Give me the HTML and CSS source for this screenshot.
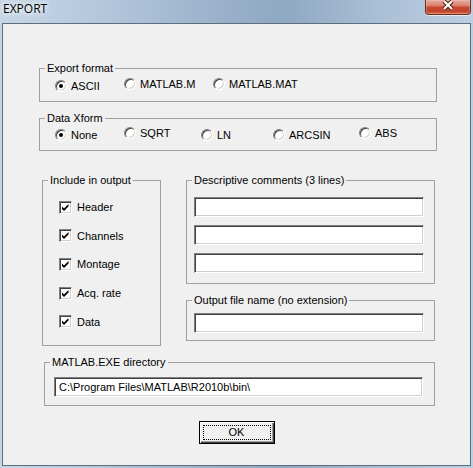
FILE: index.html
```html
<!DOCTYPE html>
<html>
<head>
<meta charset="utf-8">
<title>EXPORT</title>
<link rel="stylesheet" href="styles.css">
</head>
<body>
<div class="window">
  <div class="titlebar">
    <span class="title">EXPORT</span>
    <div class="close">
      <svg width="12" height="10" viewBox="0 0 12 10">
        <path d="M2 1 L10 9 M10 1 L2 9" stroke="#4d1b13" stroke-width="4.2" fill="none"/>
        <path d="M2 1 L10 9 M10 1 L2 9" stroke="#ffffff" stroke-width="2.2" fill="none"/>
      </svg>
    </div>
  </div>
  <div class="client">
    <fieldset class="group g-format">
      <legend>Export format</legend>
      <div class="radios r-format">
        <label class="opt low"><span class="radio on"></span>ASCII</label>
        <label class="opt"><span class="radio"></span>MATLAB.M</label>
        <label class="opt"><span class="radio"></span>MATLAB.MAT</label>
      </div>
    </fieldset>

    <fieldset class="group g-xform">
      <legend>Data Xform</legend>
      <div class="radios r-xform">
        <label class="opt low"><span class="radio on"></span>None</label>
        <label class="opt"><span class="radio"></span>SQRT</label>
        <label class="opt low"><span class="radio"></span>LN</label>
        <label class="opt low"><span class="radio"></span>ARCSIN</label>
        <label class="opt"><span class="radio"></span>ABS</label>
      </div>
    </fieldset>

    <div class="row">
      <fieldset class="group g-include">
        <legend>Include in output</legend>
        <div class="checks">
          <label class="chk"><span class="box"><svg viewBox="0 0 11 11"><polygon points="2,4.5 4,6.5 8.5,2 8.5,4.5 4,9 2,7" fill="#000"/></svg></span>Header</label>
          <label class="chk"><span class="box"><svg viewBox="0 0 11 11"><polygon points="2,4.5 4,6.5 8.5,2 8.5,4.5 4,9 2,7" fill="#000"/></svg></span>Channels</label>
          <label class="chk"><span class="box"><svg viewBox="0 0 11 11"><polygon points="2,4.5 4,6.5 8.5,2 8.5,4.5 4,9 2,7" fill="#000"/></svg></span>Montage</label>
          <label class="chk"><span class="box"><svg viewBox="0 0 11 11"><polygon points="2,4.5 4,6.5 8.5,2 8.5,4.5 4,9 2,7" fill="#000"/></svg></span>Acq. rate</label>
          <label class="chk"><span class="box"><svg viewBox="0 0 11 11"><polygon points="2,4.5 4,6.5 8.5,2 8.5,4.5 4,9 2,7" fill="#000"/></svg></span>Data</label>
        </div>
      </fieldset>

      <div class="rightcol">
        <fieldset class="group g-comments">
          <legend>Descriptive comments (3 lines)</legend>
          <div class="stack">
            <input class="field f-short" type="text" value="">
            <input class="field f-short" type="text" value="">
            <input class="field f-short" type="text" value="">
          </div>
        </fieldset>
        <fieldset class="group g-file">
          <legend>Output file name (no extension)</legend>
          <input class="field f-short" type="text" value="">
        </fieldset>
      </div>
    </div>

    <fieldset class="group g-matlab">
      <legend>MATLAB.EXE directory</legend>
      <input class="field f-long" type="text" value="C:\Program Files\MATLAB\R2010b\bin\">
    </fieldset>

    <div class="actions">
      <button class="ok" type="button"><span class="focus">OK</span></button>
    </div>
  </div>
</div>
</body>
</html>
```

FILE: styles.css
```css
* { box-sizing: border-box; }
html, body { margin: 0; padding: 0; }
body {
  width: 473px;
  height: 468px;
  overflow: hidden;
  background: #b5c9de;
}
.window {
  width: 473px;
  height: 468px;
  display: flex;
  flex-direction: column;
  padding: 0 2px 2px 2px;
  background: linear-gradient(90deg, #c6d6e7 0%, #b3c7dc 22%, #98b0c9 48%, #8fa8c3 60%, #a9bfd5 80%, #bccfe2 100%);
}
.titlebar {
  height: 23px;
  flex: none;
  display: flex;
  justify-content: space-between;
  align-items: flex-start;
}
.title {
  font: 12px "Open Sans", "DejaVu Sans", sans-serif;
  line-height: 16px;
  padding: 1px 0 0 1px;
  color: #000;
  text-shadow: 0 0 4px #fff, 0 0 8px rgba(255,255,255,0.9), 0 0 12px rgba(255,255,255,0.7);
}
.close {
  width: 46px;
  height: 15px;
  display: flex;
  justify-content: center;
  align-items: flex-start;
  border: 1px solid #6b2e25;
  border-top: none;
  border-radius: 0 0 4px 4px;
  background: linear-gradient(#e5aa9a 0%, #dc8672 38%, #c84a33 52%, #c0412a 78%, #d46a4c 100%);
  box-shadow: 0 1px 0 rgba(255,255,255,0.6), inset 0 0 0 1px rgba(255,220,210,0.3);
}
.client {
  flex: 1;
  display: flex;
  flex-direction: column;
  align-items: flex-start;
  background: #f0f0f0;
  border: 1px solid #5f6e7d;
  font: 11px "Liberation Sans", Arial, sans-serif;
  color: #000;
}
.group {
  margin: 0;
  min-width: 0;
  border: 1px solid #a0a0a0;
  padding: 0 5px;
}
.group legend {
  padding: 0 2px;
  line-height: 15px;
}
.g-format { margin: 37px 0 0 36px; width: 398px; padding-top: 1px; padding-bottom: 8px; }
.g-xform  { margin: 9px 0 0 36px;  width: 398px; padding-top: 0; padding-bottom: 8px; }

.radios {
  display: grid;
  height: 16px;
  align-items: start;
  margin-left: 10px;
}
.r-format { grid-template-columns: 69px 89px auto; }
.r-xform  { grid-template-columns: 69px 77px 72px 86px auto; }
.opt {
  display: flex;
  align-items: center;
  gap: 4px;
  height: 14px;
  line-height: 14px;
  white-space: nowrap;
}
.opt.low { margin-top: 2px; }
.radio {
  width: 12px;
  height: 12px;
  flex: none;
  position: relative;
  border-radius: 50%;
  background: #fff;
  border: 1px solid;
  border-color: #808080 #ffffff #ffffff #808080;
  box-shadow: inset 1px 1px 0 #404040, inset -1px -1px 0 #d4d0c8;
}
.radio.on::after {
  content: "";
  position: absolute;
  left: 3px;
  top: 3px;
  width: 4px;
  height: 4px;
  border-radius: 50%;
  background: #000;
}

.row {
  display: flex;
  align-items: flex-start;
  gap: 25px;
  margin: 22px 0 0 39px;
}
.g-include { width: 119px; padding-top: 5px; padding-bottom: 9px; }
.checks { display: flex; flex-direction: column; margin-left: 11px; }
.chk {
  display: flex;
  align-items: center;
  gap: 5px;
  height: 28.6px;
  white-space: nowrap;
}
.box {
  width: 13px;
  height: 13px;
  flex: none;
  display: flex;
  background: #fff;
  border: 1px solid;
  border-color: #808080 #ffffff #ffffff #808080;
  box-shadow: inset 1px 1px 0 #404040, inset -1px -1px 0 #d4d0c8;
}
.box svg { width: 11px; height: 11px; display: block; }

.rightcol { width: 249px; display: flex; flex-direction: column; gap: 9px; }
.g-comments { padding-top: 9px; padding-bottom: 10px; }
.g-file { padding-top: 5px; padding-bottom: 7px; }
.stack { display: flex; flex-direction: column; gap: 8px; }

.field {
  display: block;
  height: 20px;
  margin: 0;
  padding: 0 4px;
  font: inherit;
  color: #000;
  background: #fff;
  border: 1px solid;
  border-color: #808080 #ffffff #ffffff #808080;
  box-shadow: inset 1px 1px 0 #404040, inset -1px -1px 0 #d4d0c8;
  outline: none;
}
.f-short { width: 230px; margin-left: 2px; }
.f-long { width: 369px; margin-left: 4px; }

.g-matlab { margin: 9px 0 0 41px; width: 391px; padding-top: 7px; padding-bottom: 8px; }

.actions {
  align-self: stretch;
  display: flex;
  justify-content: center;
  margin-top: 15px;
}
.ok {
  width: 76px;
  height: 23px;
  margin: 0;
  padding: 3px;
  display: flex;
  font: inherit;
  color: #000;
  background: #f0f0f0;
  border: 1px solid #000;
  box-shadow: inset 1px 1px 0 #ffffff, inset -1px -1px 0 #404040, inset -2px -2px 0 #a0a0a0;
}
.ok .focus {
  flex: 1;
  display: flex;
  align-items: center;
  justify-content: center;
  border: 1px dotted #000;
}
```
